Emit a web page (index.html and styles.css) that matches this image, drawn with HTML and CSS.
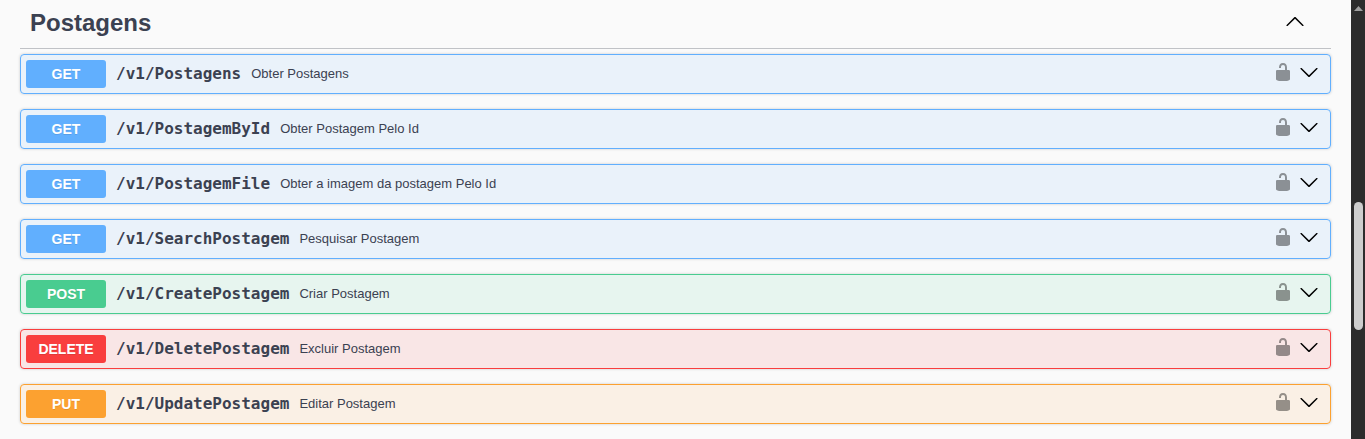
FILE: index.html
```
<!DOCTYPE html>
<html lang="pt">
<head>
<meta charset="utf-8">
<title>Postagens</title>
<link rel="stylesheet" href="styles.css">
</head>
<body>
<svg class="defs" width="0" height="0">
  <symbol id="unlocked" viewBox="0 0 20 20"><path d="M15.8 8H14V5.6C14 2.703 12.665 1 10 1 7.334 1 6 2.703 6 5.6V6h2v-.801C8 3.754 8.797 3 10 3c1.203 0 2 .754 2 2.199V8H4c-.553 0-1 .646-1 1.199V17c0 .549.428 1.139.951 1.307l1.197.387C5.672 18.861 6.55 19 7.1 19h5.8c.549 0 1.428-.139 1.951-.307l1.196-.387c.524-.167.953-.757.953-1.306V9.199C17 8.646 16.352 8 15.8 8z"/></symbol>
  <symbol id="down" viewBox="0 0 20 20"><path d="M17.418 6.109c.272-.268.709-.268.979 0s.271.701 0 .969l-7.908 7.83c-.27.268-.707.268-.979 0l-7.908-7.83c-.27-.268-.27-.701 0-.969.271-.268.709-.268.979 0L10 13.25l7.418-7.141z"/></symbol>
  <symbol id="up" viewBox="0 0 20 20"><path d="M17.418 14.908c.272.268.709.268.979 0s.271-.701 0-.969l-7.908-7.83c-.27-.268-.707-.268-.979 0l-7.908 7.83c-.27.268-.27.701 0 .969.271.268.709.268.979 0L10 7.767l7.418 7.141z"/></symbol>
</svg>
<div class="page">
  <main class="content">
    <header class="tag"><h3 class="tag-name">Postagens</h3><svg class="icon"><use href="#up"/></svg></header>
    <div class="op get"><span class="method">GET</span><span class="path">/v1/Postagens</span><span class="desc">Obter Postagens</span><svg class="icon lock"><use href="#unlocked"/></svg><svg class="icon"><use href="#down"/></svg></div>
    <div class="op get"><span class="method">GET</span><span class="path">/v1/PostagemById</span><span class="desc">Obter Postagem Pelo Id</span><svg class="icon lock"><use href="#unlocked"/></svg><svg class="icon"><use href="#down"/></svg></div>
    <div class="op get"><span class="method">GET</span><span class="path">/v1/PostagemFile</span><span class="desc">Obter a imagem da postagem Pelo Id</span><svg class="icon lock"><use href="#unlocked"/></svg><svg class="icon"><use href="#down"/></svg></div>
    <div class="op get"><span class="method">GET</span><span class="path">/v1/SearchPostagem</span><span class="desc">Pesquisar Postagem</span><svg class="icon lock"><use href="#unlocked"/></svg><svg class="icon"><use href="#down"/></svg></div>
    <div class="op post"><span class="method">POST</span><span class="path">/v1/CreatePostagem</span><span class="desc">Criar Postagem</span><svg class="icon lock"><use href="#unlocked"/></svg><svg class="icon"><use href="#down"/></svg></div>
    <div class="op delete"><span class="method">DELETE</span><span class="path">/v1/DeletePostagem</span><span class="desc">Excluir Postagem</span><svg class="icon lock"><use href="#unlocked"/></svg><svg class="icon"><use href="#down"/></svg></div>
    <div class="op put"><span class="method">PUT</span><span class="path">/v1/UpdatePostagem</span><span class="desc">Editar Postagem</span><svg class="icon lock"><use href="#unlocked"/></svg><svg class="icon"><use href="#down"/></svg></div>
  </main>
  <aside class="scrollbar">
    <svg class="scroll-up" viewBox="0 0 9 5"><path d="M4.5 0L9 5H0z"/></svg>
    <div class="thumb"></div>
  </aside>
</div>
</body>
</html>
```
FILE: styles.css
```
* { box-sizing: border-box; }
body {
  margin: 0;
  overflow: hidden;
  background: #fafafa;
  color: #3b4151;
  font-family: "Liberation Sans", Arial, sans-serif;
}
.defs { position: absolute; }
.page { display: flex; height: 439px; }
.content { flex: 1; padding: 0 20px; }
.tag {
  display: flex;
  align-items: center;
  height: 49px;
  margin-bottom: 5px;
  padding: 0 26px 5px 10px;
  border-bottom: 1px solid rgba(59, 65, 81, .3);
}
.tag-name { flex: 1; margin: 0; padding-top: 2px; font-size: 24px; line-height: 28px; }
.icon { display: block; flex: none; width: 20px; height: 20px; fill: #000; }
.tag .icon { margin-bottom: 2px; }
.op {
  display: flex;
  align-items: center;
  height: 40px;
  margin-bottom: 15px;
  padding: 5px 11px 5px 5px;
  border: 1px solid;
  border-radius: 4px;
  box-shadow: 0 0 3px rgba(0, 0, 0, .19);
}
.op .icon { margin-bottom: 4px; }
.op .lock { margin-right: 6px; opacity: .4; }
.method {
  width: 80px;
  height: 28px;
  border-radius: 3px;
  color: #fff;
  font-size: 14px;
  font-weight: 700;
  line-height: 28px;
  text-align: center;
  text-shadow: 0 1px 0 rgba(0, 0, 0, .1);
}
.path {
  padding: 0 10px 2px;
  font-family: "DejaVu Sans Mono", monospace;
  font-size: 16px;
  font-weight: 600;
}
.desc { flex: 1; padding-bottom: 2px; font-size: 13px; }
.get { border-color: #61affe; background: rgba(97, 175, 254, .1); }
.get .method { background: #61affe; }
.post { border-color: #49cc90; background: rgba(73, 204, 144, .1); }
.post .method { background: #49cc90; }
.delete { border-color: #f93e3e; background: rgba(249, 62, 62, .1); }
.delete .method { background: #f93e3e; }
.put { border-color: #fca130; background: rgba(252, 161, 48, .1); }
.put .method { background: #fca130; }
.scrollbar {
  display: flex;
  flex-direction: column;
  align-items: center;
  width: 14px;
  padding-top: 6px;
  background: #2c2c2c;
}
.scroll-up { width: 9px; height: 5px; fill: #9f9f9f; }
.thumb { width: 9px; height: 128px; margin-top: 191px; border-radius: 5px; background: #cdcdcd; }
```
